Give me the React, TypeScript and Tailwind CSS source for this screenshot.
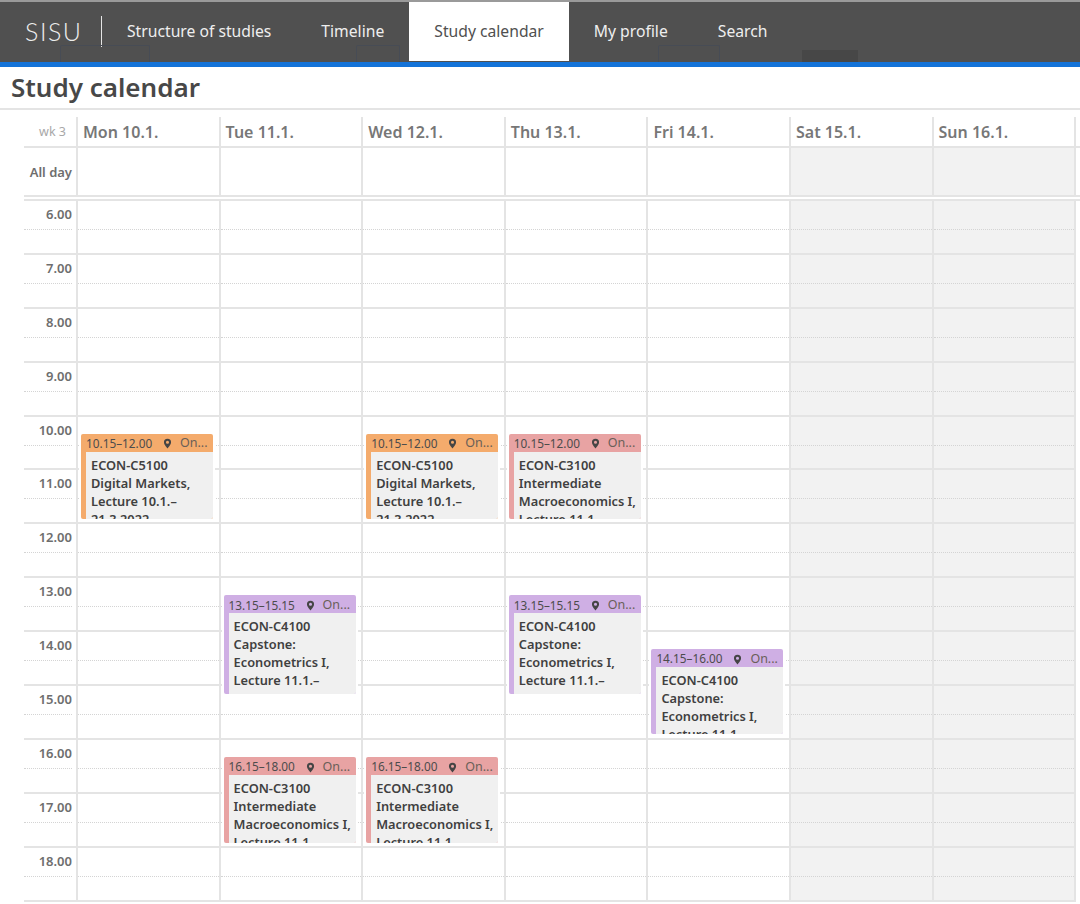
const navItems = ['Structure of studies', 'Timeline', 'Study calendar', 'My profile', 'Search'];
const days = ['Mon 10.1.', 'Tue 11.1.', 'Wed 12.1.', 'Thu 13.1.', 'Fri 14.1.', 'Sat 15.1.', 'Sun 16.1.'];
const hours = ['6.00', '7.00', '8.00', '9.00', '10.00', '11.00', '12.00', '13.00', '14.00', '15.00', '16.00', '17.00', '18.00'];

const HOUR_PX = 53.9;

const markets = { code: 'ECON-C5100', lines: ['Digital Markets,', 'Lecture 10.1.–', '21.3.2022'], bar: 'bg-[#f4ab6c]', time: '10.15–12.00', start: 10.25, height: 85 };
const macro = { code: 'ECON-C3100', lines: ['Intermediate', 'Macroeconomics I,', 'Lecture 11.1.–'], bar: 'bg-[#e8a3a3]' };
const capstone = { code: 'ECON-C4100', lines: ['Capstone:', 'Econometrics I,', 'Lecture 11.1.–', '24.2.2022'], bar: 'bg-[#cfafe4]' };

const events: Record<number, { code: string; lines: string[]; bar: string; time: string; start: number; height: number }[]> = {
  0: [markets],
  1: [
    { ...capstone, time: '13.15–15.15', start: 13.25, height: 99 },
    { ...macro, time: '16.15–18.00', start: 16.25, height: 86 },
  ],
  2: [markets, { ...macro, time: '16.15–18.00', start: 16.25, height: 86 }],
  3: [
    { ...macro, time: '10.15–12.00', start: 10.25, height: 85 },
    { ...capstone, time: '13.15–15.15', start: 13.25, height: 99 },
  ],
  4: [{ ...capstone, lines: ['Capstone:', 'Econometrics I,', 'Lecture 11.1.'], time: '14.15–16.00', start: 14.25, height: 85 }],
};

function Pin() {
  return (
    <svg viewBox="0 0 12 12" className="h-[11px] w-[11px] shrink-0 fill-[#454545]">
      <path
        fillRule="evenodd"
        d="M6 .8a3.9 3.9 0 0 0-3.9 3.9C2.1 7.2 6 11.4 6 11.4s3.9-4.2 3.9-6.7A3.9 3.9 0 0 0 6 .8zm0 2.2a1.7 1.7 0 1 1 0 3.4A1.7 1.7 0 0 1 6 3z"
      />
    </svg>
  );
}

function CalendarEvent({ code, lines, bar, time, start, height }: { code: string; lines: string[]; bar: string; time: string; start: number; height: number }) {
  return (
    <div
      className={`absolute left-[3px] w-[132px] overflow-hidden rounded-[2px] shadow-[0_0_0_2px_#fff] ${bar}`}
      style={{ top: (start - 6) * HOUR_PX + 3.6, height }}
    >
      <div className="flex h-[18px] items-center pl-[5px] pt-[2px] text-[11.8px] text-[#4c4c4c]">
        <span className="w-[74px] shrink-0 whitespace-nowrap">{time}</span>
        <span className="ml-[2px]"><Pin /></span>
        <span className="ml-[7px] text-[12.5px] text-[#6a5f58]">On...</span>
      </div>
      <div className="ml-[5px] h-full bg-[#f0f0f0] pl-[5px] pt-[4px] text-[12.8px] font-semibold leading-[18px] text-[#404040]">
        <div>{code}</div>
        {lines.map((line) => (
          <div key={line} className="whitespace-nowrap">{line}</div>
        ))}
      </div>
    </div>
  );
}

export default function App() {
  return (
    <div className="relative h-[904px] w-[1080px] overflow-hidden bg-white font-['Noto_Sans',sans-serif]">
      {/* Nav */}
      <div className="relative h-[67px] border-t-2 border-b-[5px] border-t-[#9a9a9a] border-b-[#1473d8] bg-[#505050]">
        <div className="flex h-full items-start">
          <div className="mt-[14px] w-[102px] border-r border-[#e5e5e5] pl-[25px] text-[25px] font-light leading-[31px] tracking-[1.5px] text-[#eeeeee] font-['Lato',sans-serif]">
            SISU
          </div>
          <div className="flex h-[59px] text-[15.7px] text-[#eeeeee]">
            {navItems.map((item) =>
              item === 'Study calendar' ? (
                <div key={item} className="flex items-center bg-white px-[25px] text-[#505050]">
                  {item}
                </div>
              ) : (
                <div key={item} className="flex items-center px-[25px]">
                  {item}
                </div>
              ),
            )}
          </div>
        </div>
        <div className="absolute left-[60px] top-[43px] h-[17px] w-[90px] rounded-t-[2px] border border-b-0 border-[#474c55]" />
        <div className="absolute left-[356px] top-[43px] h-[17px] w-[44px] rounded-t-[2px] border border-b-0 border-[#474c55]" />
        <div className="absolute left-[658px] top-[43px] h-[17px] w-[62px] rounded-t-[2px] border border-b-0 border-[#474c55]" />
        <div className="absolute left-[802px] top-[48px] h-[12px] w-[56px] bg-[#474747]" />
      </div>

      {/* Title */}
      <div className="flex h-[43px] items-center border-b-2 border-[#e4e4e4] pl-[11px] text-[26px] font-semibold text-[#484848]">
        Study calendar
      </div>

      {/* Calendar */}
      <div className="pl-[24px] pt-[7px]">
        {/* Header */}
        <div className="flex h-[31px] border-b-2 border-[#e4e4e4]">
          <div className="w-[52px] shrink-0 pr-[10px] pt-[6px] text-right text-[12.5px] text-[#a8a8a8]">wk 3</div>
          {days.map((day, i) => (
            <div key={day} className={`shrink-0 border-l-2 border-[#e4e4e4] pl-[5px] pt-[3px] text-[16px] font-semibold text-[#777777] ${i === 6 ? 'w-[144.6px] border-r-2' : 'w-[142.6px]'}`}>
              {day}
            </div>
          ))}
        </div>

        {/* All day */}
        <div className="flex h-[49px] border-b-2 border-[#e4e4e4]">
          <div className="w-[52px] shrink-0 pr-[4px] pt-[15px] text-right text-[13px] font-semibold text-[#6e6e6e]">All day</div>
          {days.map((day, i) => (
            <div key={day} className={`shrink-0 border-l-2 border-[#e4e4e4] ${i > 4 ? 'bg-[#f2f2f2]' : ''} ${i === 6 ? 'w-[144.6px] border-r-2' : 'w-[142.6px]'}`} />
          ))}
        </div>

        {/* Hour grid */}
        <div className="mt-[2px] flex border-t-2 border-[#e4e4e4]">
          <div className="w-[52px] shrink-0">
            {hours.map((hour) => (
              <div key={hour} className="h-[53.9px] border-b-2 border-[#e4e4e4] pr-[4px] pt-[3px] text-right text-[13px] font-semibold text-[#6e6e6e]">
                <div className="h-[26px] border-b border-dotted border-[#d4d4d4] pt-[1px]">{hour}</div>
              </div>
            ))}
          </div>
          {days.map((day, i) => (
            <div key={day} className={`relative shrink-0 border-l-2 border-[#e4e4e4] ${i > 4 ? 'bg-[#f2f2f2]' : ''} ${i === 6 ? 'w-[144.6px] border-r-2' : 'w-[142.6px]'}`}>
              {hours.map((hour) => (
                <div key={hour} className="h-[53.9px] border-b-2 border-[#e4e4e4] pt-[3px]">
                  <div className="h-[26px] border-b border-dotted border-[#d4d4d4]" />
                </div>
              ))}
              {(events[i] ?? []).map((ev) => (
                <CalendarEvent key={ev.time} {...ev} />
              ))}
            </div>
          ))}
        </div>
      </div>
    </div>
  );
}
